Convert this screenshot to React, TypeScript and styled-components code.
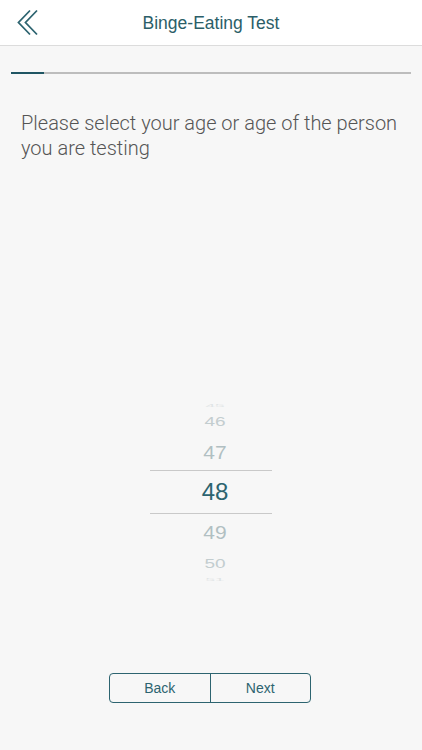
import React from "react";
import styled, { createGlobalStyle } from "styled-components";

const GlobalStyle = createGlobalStyle`
    html, body {
        margin: 0;
        padding: 0;
        background: #f7f7f7;
    }
    * {
        box-sizing: border-box;
    }
`;

const teal = "#2d6470";

type Row = { value: number; height: number; scale: number; size: number; color: string };

const rows: Row[] = [
    { value: 45, height: 6, scale: 0.25, size: 17, color: "#dfe4e5" },
    { value: 46, height: 26, scale: 0.68, size: 19, color: "#c3cdcf" },
    { value: 47, height: 36, scale: 0.86, size: 21, color: "#b1bfc2" },
    { value: 48, height: 44, scale: 1, size: 24, color: teal },
    { value: 49, height: 36, scale: 0.86, size: 21, color: "#b1bfc2" },
    { value: 50, height: 26, scale: 0.68, size: 19, color: "#c3cdcf" },
    { value: 51, height: 6, scale: 0.25, size: 17, color: "#dfe4e5" },
];

const BackIcon = () => (
    <svg width="24" height="28" viewBox="0 0 24 28" fill="none">
        <path d="M14 1.5 L2.5 13.5 L14 25.5" stroke={teal} strokeWidth="1.8" />
        <path d="M21 1.5 L9.5 13.5 L21 25.5" stroke={teal} strokeWidth="1.8" />
    </svg>
);

export default function App() {
    return (
        <Page>
            <GlobalStyle />
            <Header>
                <BackButton aria-label="Back">
                    <BackIcon />
                </BackButton>
                <Title>Binge-Eating Test</Title>
            </Header>
            <Body>
                <Progress>
                    <ProgressFill style={{ width: `${(1 / 12) * 100}%` }} />
                </Progress>
                <Question>Please select your age or age of the person you are testing</Question>
                <Picker>
                    {rows.map((r) => (
                        <PickerRow key={r.value} $height={r.height} $selected={r.value === 48}>
                            <PickerValue $scale={r.scale} $size={r.size} $color={r.color}>
                                {r.value}
                            </PickerValue>
                        </PickerRow>
                    ))}
                </Picker>
                <ButtonGroup>
                    <NavButton>Back</NavButton>
                    <NavButton>Next</NavButton>
                </ButtonGroup>
            </Body>
        </Page>
    );
}

const Page = styled.div`
    min-height: 750px;
    background: #f7f7f7;
    font-family: "Liberation Sans", Arial, sans-serif;
`;

const Header = styled.header`
    position: relative;
    height: 46px;
    background: #ffffff;
    border-bottom: 1px solid #dcdcdc;
    display: flex;
    align-items: center;
    justify-content: center;
`;

const BackButton = styled.button`
    position: absolute;
    left: 16px;
    top: 9px;
    padding: 0;
    border: none;
    background: none;
    display: flex;
`;

const Title = styled.h1`
    margin: 2px 0 0;
    font-size: 17.5px;
    font-weight: 400;
    color: #2b5e68;
`;

const Body = styled.main`
    padding: 26px 11px 0;
    display: flex;
    flex-direction: column;
`;

const Progress = styled.div`
    height: 2px;
    background: #bdbdbd;
`;

const ProgressFill = styled.div`
    height: 100%;
    background: #1f5563;
`;

const Question = styled.p`
    margin: 37px 10px 0;
    font-family: Roboto, "Liberation Sans", sans-serif;
    font-weight: 300;
    font-size: 20px;
    line-height: 25px;
    color: #555555;
`;

const Picker = styled.div`
    margin: 241px auto 0;
    width: 122px;
    display: flex;
    flex-direction: column;
`;

const PickerRow = styled.div<{ $height: number; $selected: boolean }>`
    height: ${(p) => p.$height}px;
    padding-left: 8px;
    display: flex;
    align-items: center;
    justify-content: center;
    overflow: visible;
    border-top: ${(p) => (p.$selected ? "1px solid #c9c9c9" : "none")};
    border-bottom: ${(p) => (p.$selected ? "1px solid #c9c9c9" : "none")};
`;

const PickerValue = styled.span<{ $scale: number; $size: number; $color: string }>`
    font-size: ${(p) => p.$size}px;
    line-height: 1;
    color: ${(p) => p.$color};
    transform: scaleY(${(p) => p.$scale});
`;

const ButtonGroup = styled.div`
    margin: 91px auto 0;
    width: 202px;
    height: 30px;
    display: flex;
    border: 1px solid ${teal};
    border-radius: 4px;
    overflow: hidden;
    transform: translateX(-1px);
`;

const NavButton = styled.button`
    flex: 1;
    border: none;
    background: transparent;
    font-family: "Liberation Sans", Arial, sans-serif;
    font-size: 14px;
    color: ${teal};
    padding: 0;

    & + & {
        border-left: 1px solid ${teal};
    }
`;
